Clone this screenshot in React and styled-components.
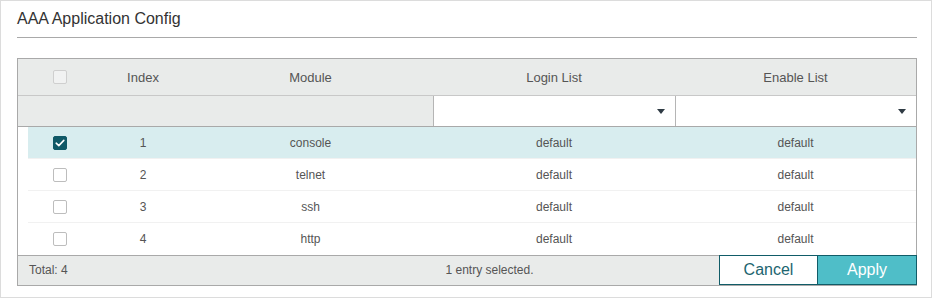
import styled, { createGlobalStyle } from "styled-components";

const GlobalStyle = createGlobalStyle`
  body {
    margin: 0;
    background: #ffffff;
    font-family: "Liberation Sans", Arial, sans-serif;
  }
`;

const rows = [
  { index: 1, module: "console", login: "default", enable: "default", checked: true },
  { index: 2, module: "telnet", login: "default", enable: "default" },
  { index: 3, module: "ssh", login: "default", enable: "default" },
  { index: 4, module: "http", login: "default", enable: "default" },
];

export default function App() {
  return (
    <>
      <GlobalStyle />
      <Panel>
        <Title>AAA Application Config</Title>
        <Table>
          <HeaderRow>
            <CheckCell $first={35}>
              <CheckBox $muted />
            </CheckCell>
            <HeadCell>Index</HeadCell>
            <HeadCell>Module</HeadCell>
            <HeadCell>Login List</HeadCell>
            <HeadCell>Enable List</HeadCell>
          </HeaderRow>
          <FilterRow>
            <FilterBlank />
            <SelectCell>
              <Caret />
            </SelectCell>
            <SelectCell>
              <Caret />
            </SelectCell>
          </FilterRow>
          <Body>
            {rows.map((r) => (
              <BodyRow key={r.index} $selected={r.checked}>
                <CheckCell $first={25}>
                  <CheckBox $checked={r.checked}>
                    {r.checked && (
                      <svg width="10" height="8" viewBox="0 0 10 8">
                        <path
                          d="M1.2 4.2 L3.8 6.6 L8.8 1.4"
                          fill="none"
                          stroke="#ffffff"
                          strokeWidth="1.6"
                          strokeLinecap="round"
                          strokeLinejoin="round"
                        />
                      </svg>
                    )}
                  </CheckBox>
                </CheckCell>
                <Cell>{r.index}</Cell>
                <Cell>{r.module}</Cell>
                <Cell>{r.login}</Cell>
                <Cell>{r.enable}</Cell>
              </BodyRow>
            ))}
          </Body>
          <Footer>
            <Total>Total: 4</Total>
            <Selected>1 entry selected.</Selected>
            <Button>Cancel</Button>
            <Button $primary>Apply</Button>
          </Footer>
        </Table>
      </Panel>
    </>
  );
}

const Panel = styled.div`
  box-sizing: border-box;
  width: 932px;
  height: 298px;
  border: 1px solid #dcdcdc;
  padding: 0 14px 0 16px;
`;

const Title = styled.div`
  height: 36px;
  line-height: 36px;
  border-bottom: 1px solid #a9a9a9;
  font-size: 16px;
  color: #333333;
`;

const Table = styled.div`
  margin-top: 20px;
  width: 900px;
  box-sizing: border-box;
  border: 1px solid #a9a9a9;
`;

const HeaderRow = styled.div`
  display: grid;
  grid-template-columns: 80px 90px 245px 242px 1fr;
  height: 36px;
  background: #e9ebea;
  border-bottom: 1px solid #c8c8c8;
  align-items: center;
`;

const HeadCell = styled.div`
  text-align: center;
  font-size: 13px;
  color: #555555;
`;

const CheckCell = styled.div`
  display: flex;
  align-items: center;
  padding-left: ${(p) => p.$first}px;
`;

const CheckBox = styled.span`
  display: flex;
  align-items: center;
  justify-content: center;
  box-sizing: border-box;
  width: 14px;
  height: 14px;
  border-radius: 2px;
  border: 1px solid ${(p) => (p.$checked ? "#0f5967" : p.$muted ? "#cfcfcf" : "#bdbdbd")};
  background: ${(p) => (p.$checked ? "#0f5967" : p.$muted ? "#f1f2f2" : "#ffffff")};
`;

const FilterRow = styled.div`
  display: grid;
  grid-template-columns: 415px 242px 1fr;
  height: 30px;
  background: #e9ebea;
  border-bottom: 1px solid #a9a9a9;
`;

const FilterBlank = styled.div``;

const SelectCell = styled.div`
  display: flex;
  align-items: center;
  justify-content: flex-end;
  padding-right: 10px;
  background: #ffffff;
  border-left: 1px solid #b5b5b5;
`;

const Caret = styled.span`
  width: 0;
  height: 0;
  border-left: 4.5px solid transparent;
  border-right: 4.5px solid transparent;
  border-top: 5px solid #2f3b44;
`;

const Body = styled.div`
  padding-left: 10px;
`;

const BodyRow = styled.div`
  display: grid;
  grid-template-columns: 70px 90px 245px 242px 1fr;
  height: 31px;
  align-items: center;
  background: ${(p) => (p.$selected ? "#d8edef" : "#ffffff")};
  border-bottom: 1px solid #f1f1f1;

  &:last-child {
    border-bottom: none;
    height: 32px;
  }
`;

const Cell = styled.div`
  text-align: center;
  font-size: 12px;
  color: #555555;
`;

const Footer = styled.div`
  display: flex;
  height: 29px;
  background: #e9ebea;
  border-top: 1px solid #a9a9a9;
`;

const Total = styled.div`
  width: 231px;
  padding-left: 11px;
  line-height: 29px;
  font-size: 12px;
  color: #555555;
`;

const Selected = styled.div`
  flex: 1;
  text-align: center;
  line-height: 29px;
  font-size: 12px;
  color: #555555;
`;

const Button = styled.button`
  box-sizing: border-box;
  width: 99px;
  height: 30px;
  margin: -1px 0 -1px 0;
  padding: 0;
  border: 1px solid #115c68;
  background: ${(p) => (p.$primary ? "#4fbec8" : "#ffffff")};
  color: ${(p) => (p.$primary ? "#ffffff" : "#1d6570")};
  font-family: "Liberation Sans", Arial, sans-serif;
  font-size: 16px;
  cursor: pointer;

  & + & {
    border-left: none;
    width: 99px;
    margin-right: -1px;
  }
`;
